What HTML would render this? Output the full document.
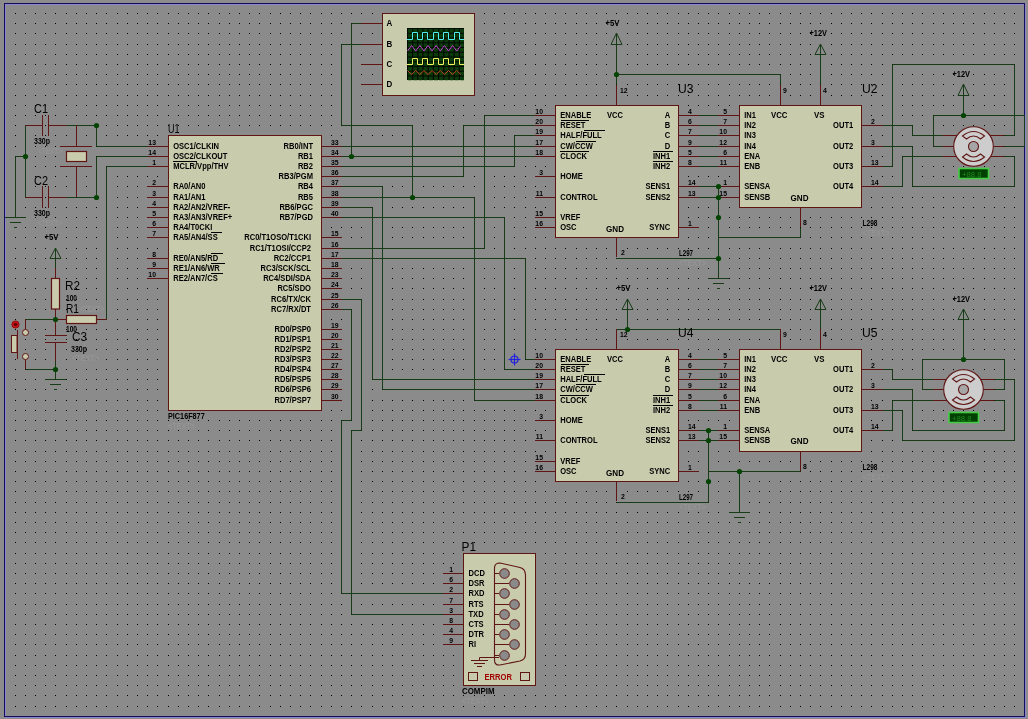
<!DOCTYPE html><html><head><meta charset="utf-8"><style>html,body{margin:0;padding:0;background:#8c8c8c;overflow:hidden}svg{display:block;will-change:transform;font-family:"Liberation Sans",sans-serif}</style></head><body><svg width="1028" height="719" viewBox="0 0 1028 719"><rect x="0" y="0" width="1028" height="719" fill="#8c8c8c"/>
<rect x="4" y="3" width="1021" height="714" fill="#8b8b8b"/>
<defs><pattern id="dx" x="15" y="0" width="51" height="719" patternUnits="userSpaceOnUse"><rect x="0" y="0" width="1" height="719" fill="#000"/><rect x="10" y="0" width="1" height="719" fill="#000"/><rect x="20" y="0" width="1" height="719" fill="#000"/><rect x="30" y="0" width="1" height="719" fill="#000"/><rect x="40" y="0" width="1" height="719" fill="#000"/></pattern></defs>
<rect x="15" y="13" width="1004" height="1" fill="url(#dx)"/>
<rect x="15" y="23" width="1004" height="1" fill="url(#dx)"/>
<rect x="15" y="33" width="1004" height="1" fill="url(#dx)"/>
<rect x="15" y="44" width="1004" height="1" fill="url(#dx)"/>
<rect x="15" y="54" width="1004" height="1" fill="url(#dx)"/>
<rect x="15" y="64" width="1004" height="1" fill="url(#dx)"/>
<rect x="15" y="74" width="1004" height="1" fill="url(#dx)"/>
<rect x="15" y="84" width="1004" height="1" fill="url(#dx)"/>
<rect x="15" y="95" width="1004" height="1" fill="url(#dx)"/>
<rect x="15" y="105" width="1004" height="1" fill="url(#dx)"/>
<rect x="15" y="115" width="1004" height="1" fill="url(#dx)"/>
<rect x="15" y="125" width="1004" height="1" fill="url(#dx)"/>
<rect x="15" y="135" width="1004" height="1" fill="url(#dx)"/>
<rect x="15" y="146" width="1004" height="1" fill="url(#dx)"/>
<rect x="15" y="156" width="1004" height="1" fill="url(#dx)"/>
<rect x="15" y="166" width="1004" height="1" fill="url(#dx)"/>
<rect x="15" y="176" width="1004" height="1" fill="url(#dx)"/>
<rect x="15" y="186" width="1004" height="1" fill="url(#dx)"/>
<rect x="15" y="197" width="1004" height="1" fill="url(#dx)"/>
<rect x="15" y="207" width="1004" height="1" fill="url(#dx)"/>
<rect x="15" y="217" width="1004" height="1" fill="url(#dx)"/>
<rect x="15" y="227" width="1004" height="1" fill="url(#dx)"/>
<rect x="15" y="237" width="1004" height="1" fill="url(#dx)"/>
<rect x="15" y="248" width="1004" height="1" fill="url(#dx)"/>
<rect x="15" y="258" width="1004" height="1" fill="url(#dx)"/>
<rect x="15" y="268" width="1004" height="1" fill="url(#dx)"/>
<rect x="15" y="278" width="1004" height="1" fill="url(#dx)"/>
<rect x="15" y="288" width="1004" height="1" fill="url(#dx)"/>
<rect x="15" y="299" width="1004" height="1" fill="url(#dx)"/>
<rect x="15" y="309" width="1004" height="1" fill="url(#dx)"/>
<rect x="15" y="319" width="1004" height="1" fill="url(#dx)"/>
<rect x="15" y="329" width="1004" height="1" fill="url(#dx)"/>
<rect x="15" y="339" width="1004" height="1" fill="url(#dx)"/>
<rect x="15" y="349" width="1004" height="1" fill="url(#dx)"/>
<rect x="15" y="359" width="1004" height="1" fill="url(#dx)"/>
<rect x="15" y="369" width="1004" height="1" fill="url(#dx)"/>
<rect x="15" y="379" width="1004" height="1" fill="url(#dx)"/>
<rect x="15" y="389" width="1004" height="1" fill="url(#dx)"/>
<rect x="15" y="400" width="1004" height="1" fill="url(#dx)"/>
<rect x="15" y="410" width="1004" height="1" fill="url(#dx)"/>
<rect x="15" y="420" width="1004" height="1" fill="url(#dx)"/>
<rect x="15" y="430" width="1004" height="1" fill="url(#dx)"/>
<rect x="15" y="440" width="1004" height="1" fill="url(#dx)"/>
<rect x="15" y="451" width="1004" height="1" fill="url(#dx)"/>
<rect x="15" y="461" width="1004" height="1" fill="url(#dx)"/>
<rect x="15" y="471" width="1004" height="1" fill="url(#dx)"/>
<rect x="15" y="481" width="1004" height="1" fill="url(#dx)"/>
<rect x="15" y="491" width="1004" height="1" fill="url(#dx)"/>
<rect x="15" y="502" width="1004" height="1" fill="url(#dx)"/>
<rect x="15" y="512" width="1004" height="1" fill="url(#dx)"/>
<rect x="15" y="522" width="1004" height="1" fill="url(#dx)"/>
<rect x="15" y="532" width="1004" height="1" fill="url(#dx)"/>
<rect x="15" y="542" width="1004" height="1" fill="url(#dx)"/>
<rect x="15" y="553" width="1004" height="1" fill="url(#dx)"/>
<rect x="15" y="563" width="1004" height="1" fill="url(#dx)"/>
<rect x="15" y="573" width="1004" height="1" fill="url(#dx)"/>
<rect x="15" y="583" width="1004" height="1" fill="url(#dx)"/>
<rect x="15" y="593" width="1004" height="1" fill="url(#dx)"/>
<rect x="15" y="604" width="1004" height="1" fill="url(#dx)"/>
<rect x="15" y="614" width="1004" height="1" fill="url(#dx)"/>
<rect x="15" y="624" width="1004" height="1" fill="url(#dx)"/>
<rect x="15" y="634" width="1004" height="1" fill="url(#dx)"/>
<rect x="15" y="644" width="1004" height="1" fill="url(#dx)"/>
<rect x="15" y="655" width="1004" height="1" fill="url(#dx)"/>
<rect x="15" y="665" width="1004" height="1" fill="url(#dx)"/>
<rect x="15" y="675" width="1004" height="1" fill="url(#dx)"/>
<rect x="15" y="685" width="1004" height="1" fill="url(#dx)"/>
<rect x="15" y="695" width="1004" height="1" fill="url(#dx)"/>
<rect x="15" y="706" width="1004" height="1" fill="url(#dx)"/>
<rect x="5.5" y="4.5" width="1020" height="713" fill="none" stroke="#8a86cc" stroke-width="1"/>
<rect x="4.5" y="3.5" width="1020" height="713" fill="none" stroke="#140c5a" stroke-width="1"/>
<polyline points="361.5,23.5 351.5,23.5 351.5,156.5" fill="none" stroke="#173a17" stroke-width="1"/>
<polyline points="361.5,44.5 341.5,44.5 341.5,125.5 412.5,125.5 412.5,197.5" fill="none" stroke="#173a17" stroke-width="1"/>
<polyline points="341.5,146.5 535.5,146.5" fill="none" stroke="#173a17" stroke-width="1"/>
<polyline points="341.5,156.5 535.5,156.5" fill="none" stroke="#173a17" stroke-width="1"/>
<polyline points="341.5,166.5 514.5,166.5 514.5,135.5 535.5,135.5" fill="none" stroke="#173a17" stroke-width="1"/>
<polyline points="341.5,176.5 463.5,176.5 463.5,125.5 535.5,125.5" fill="none" stroke="#173a17" stroke-width="1"/>
<polyline points="341.5,248.5 484.5,248.5 484.5,115.5 535.5,115.5" fill="none" stroke="#173a17" stroke-width="1"/>
<polyline points="341.5,186.5 382.5,186.5 382.5,389.5 535.5,389.5" fill="none" stroke="#173a17" stroke-width="1"/>
<polyline points="341.5,197.5 474.5,197.5 474.5,400.5 535.5,400.5" fill="none" stroke="#173a17" stroke-width="1"/>
<polyline points="341.5,207.5 372.5,207.5 372.5,379.5 535.5,379.5" fill="none" stroke="#173a17" stroke-width="1"/>
<polyline points="341.5,217.5 504.5,217.5 504.5,369.5 535.5,369.5" fill="none" stroke="#173a17" stroke-width="1"/>
<polyline points="341.5,258.5 525.5,258.5 525.5,359.5 535.5,359.5" fill="none" stroke="#173a17" stroke-width="1"/>
<polyline points="341.5,299.5 361.5,299.5 361.5,430.5 351.5,430.5 351.5,614.5 443.5,614.5" fill="none" stroke="#173a17" stroke-width="1"/>
<polyline points="341.5,309.5 351.5,309.5 351.5,420.5 341.5,420.5 341.5,593.5 443.5,593.5" fill="none" stroke="#173a17" stroke-width="1"/>
<polygon points="616.5,33 611.0,44.5 622.0,44.5" fill="none" stroke="#173a17" stroke-width="1"/>
<text x="605.5" y="26" font-size="8.4" font-weight="bold" text-anchor="start" fill="#000" textLength="14" lengthAdjust="spacingAndGlyphs" >+5V</text>
<polyline points="616.5,33.5 616.5,84.5" fill="none" stroke="#173a17" stroke-width="1"/>
<polyline points="616.5,74.5 780.5,74.5 780.5,84.5" fill="none" stroke="#173a17" stroke-width="1"/>
<polyline points="616.5,258.5 718.5,258.5" fill="none" stroke="#173a17" stroke-width="1"/>
<polyline points="698.5,115.5 718.5,115.5" fill="none" stroke="#173a17" stroke-width="1"/>
<polyline points="698.5,125.5 718.5,125.5" fill="none" stroke="#173a17" stroke-width="1"/>
<polyline points="698.5,135.5 718.5,135.5" fill="none" stroke="#173a17" stroke-width="1"/>
<polyline points="698.5,146.5 718.5,146.5" fill="none" stroke="#173a17" stroke-width="1"/>
<polyline points="698.5,156.5 718.5,156.5" fill="none" stroke="#173a17" stroke-width="1"/>
<polyline points="698.5,166.5 718.5,166.5" fill="none" stroke="#173a17" stroke-width="1"/>
<polyline points="698.5,186.5 718.5,186.5" fill="none" stroke="#173a17" stroke-width="1"/>
<polyline points="698.5,197.5 718.5,197.5" fill="none" stroke="#173a17" stroke-width="1"/>
<polyline points="718.5,186.5 718.5,278.5" fill="none" stroke="#173a17" stroke-width="1"/>
<polyline points="718.5,237.5 800.5,237.5 800.5,227.5" fill="none" stroke="#173a17" stroke-width="1"/>
<line x1="708" y1="278.5" x2="729" y2="278.5" stroke="#173a17" stroke-width="1"/>
<line x1="713" y1="283.5" x2="724" y2="283.5" stroke="#173a17" stroke-width="1"/>
<line x1="717" y1="288.5" x2="720" y2="288.5" stroke="#173a17" stroke-width="1"/>
<polygon points="820.5,44 815.0,54.5 826.0,54.5" fill="none" stroke="#173a17" stroke-width="1"/>
<text x="809.5" y="36" font-size="8.4" font-weight="bold" text-anchor="start" fill="#000" textLength="17.5" lengthAdjust="spacingAndGlyphs" >+12V</text>
<polyline points="820.5,44.5 820.5,84.5" fill="none" stroke="#173a17" stroke-width="1"/>
<polyline points="882.5,125.5 912.5,125.5 912.5,135.5 943.5,135.5" fill="none" stroke="#173a17" stroke-width="1"/>
<polyline points="882.5,146.5 912.5,146.5 912.5,186.5 1014.5,186.5 1014.5,156.5 1004.5,156.5" fill="none" stroke="#173a17" stroke-width="1"/>
<polyline points="882.5,166.5 892.5,166.5 892.5,64.5 1014.5,64.5 1014.5,135.5 1004.5,135.5" fill="none" stroke="#173a17" stroke-width="1"/>
<polyline points="882.5,186.5 902.5,186.5 902.5,156.5 943.5,156.5" fill="none" stroke="#173a17" stroke-width="1"/>
<polygon points="963.5,84 958.0,95.5 969.0,95.5" fill="none" stroke="#173a17" stroke-width="1"/>
<text x="952.5" y="77" font-size="8.4" font-weight="bold" text-anchor="start" fill="#000" textLength="17.5" lengthAdjust="spacingAndGlyphs" >+12V</text>
<polyline points="963.5,84.5 963.5,115.5" fill="none" stroke="#173a17" stroke-width="1"/>
<polyline points="943.5,146.5 933.5,146.5 933.5,115.5 1024.5,115.5" fill="none" stroke="#173a17" stroke-width="1"/>
<polyline points="1004.5,146.5 1024.5,146.5 1024.5,115.5" fill="none" stroke="#173a17" stroke-width="1"/>
<line x1="943" y1="135.5" x2="957" y2="135.5" stroke="#601515" stroke-width="1"/>
<line x1="990" y1="135.5" x2="1004" y2="135.5" stroke="#601515" stroke-width="1"/>
<line x1="943" y1="146.5" x2="957" y2="146.5" stroke="#601515" stroke-width="1"/>
<line x1="990" y1="146.5" x2="1004" y2="146.5" stroke="#601515" stroke-width="1"/>
<line x1="943" y1="156.5" x2="957" y2="156.5" stroke="#601515" stroke-width="1"/>
<line x1="990" y1="156.5" x2="1004" y2="156.5" stroke="#601515" stroke-width="1"/>
<polygon points="627.5,299 622.0,309.5 633.0,309.5" fill="none" stroke="#173a17" stroke-width="1"/>
<text x="616.5" y="291" font-size="8.4" font-weight="bold" text-anchor="start" fill="#000" textLength="14" lengthAdjust="spacingAndGlyphs" >+5V</text>
<polyline points="627.5,299.5 627.5,329.5" fill="none" stroke="#173a17" stroke-width="1"/>
<polyline points="616.5,329.5 780.5,329.5" fill="none" stroke="#173a17" stroke-width="1"/>
<polyline points="616.5,329.5 616.5,339.5" fill="none" stroke="#173a17" stroke-width="1"/>
<polyline points="616.5,502.5 708.5,502.5 708.5,430.5" fill="none" stroke="#173a17" stroke-width="1"/>
<polyline points="698.5,359.5 718.5,359.5" fill="none" stroke="#173a17" stroke-width="1"/>
<polyline points="698.5,369.5 718.5,369.5" fill="none" stroke="#173a17" stroke-width="1"/>
<polyline points="698.5,379.5 718.5,379.5" fill="none" stroke="#173a17" stroke-width="1"/>
<polyline points="698.5,389.5 718.5,389.5" fill="none" stroke="#173a17" stroke-width="1"/>
<polyline points="698.5,400.5 718.5,400.5" fill="none" stroke="#173a17" stroke-width="1"/>
<polyline points="698.5,410.5 718.5,410.5" fill="none" stroke="#173a17" stroke-width="1"/>
<polyline points="698.5,430.5 718.5,430.5" fill="none" stroke="#173a17" stroke-width="1"/>
<polyline points="698.5,440.5 718.5,440.5" fill="none" stroke="#173a17" stroke-width="1"/>
<polyline points="708.5,471.5 800.5,471.5 800.5,461.5" fill="none" stroke="#173a17" stroke-width="1"/>
<polyline points="739.5,471.5 739.5,512.5" fill="none" stroke="#173a17" stroke-width="1"/>
<line x1="729" y1="512.5" x2="750" y2="512.5" stroke="#173a17" stroke-width="1"/>
<line x1="734" y1="517.5" x2="745" y2="517.5" stroke="#173a17" stroke-width="1"/>
<line x1="738" y1="522.5" x2="741" y2="522.5" stroke="#173a17" stroke-width="1"/>
<polygon points="820.5,299 815.0,309.5 826.0,309.5" fill="none" stroke="#173a17" stroke-width="1"/>
<text x="809.5" y="291" font-size="8.4" font-weight="bold" text-anchor="start" fill="#000" textLength="17.5" lengthAdjust="spacingAndGlyphs" >+12V</text>
<polyline points="820.5,299.5 820.5,329.5" fill="none" stroke="#173a17" stroke-width="1"/>
<polyline points="882.5,369.5 892.5,369.5 892.5,379.5 933.5,379.5" fill="none" stroke="#173a17" stroke-width="1"/>
<polyline points="882.5,389.5 912.5,389.5 912.5,430.5 1004.5,430.5 1004.5,400.5 994.5,400.5" fill="none" stroke="#173a17" stroke-width="1"/>
<polyline points="882.5,410.5 902.5,410.5 902.5,440.5 1014.5,440.5 1014.5,379.5 994.5,379.5" fill="none" stroke="#173a17" stroke-width="1"/>
<polyline points="882.5,430.5 892.5,430.5 892.5,400.5 933.5,400.5" fill="none" stroke="#173a17" stroke-width="1"/>
<polygon points="963.5,309 958.0,319.5 969.0,319.5" fill="none" stroke="#173a17" stroke-width="1"/>
<text x="952.5" y="302" font-size="8.4" font-weight="bold" text-anchor="start" fill="#000" textLength="17.5" lengthAdjust="spacingAndGlyphs" >+12V</text>
<polyline points="963.5,309.5 963.5,359.5" fill="none" stroke="#173a17" stroke-width="1"/>
<polyline points="922.5,389.5 922.5,359.5 1004.5,359.5 1004.5,389.5 994.5,389.5" fill="none" stroke="#173a17" stroke-width="1"/>
<polyline points="922.5,389.5 933.5,389.5" fill="none" stroke="#173a17" stroke-width="1"/>
<line x1="933" y1="379.5" x2="947" y2="379.5" stroke="#601515" stroke-width="1"/>
<line x1="980" y1="379.5" x2="994" y2="379.5" stroke="#601515" stroke-width="1"/>
<line x1="933" y1="389.5" x2="947" y2="389.5" stroke="#601515" stroke-width="1"/>
<line x1="980" y1="389.5" x2="994" y2="389.5" stroke="#601515" stroke-width="1"/>
<line x1="933" y1="400.5" x2="947" y2="400.5" stroke="#601515" stroke-width="1"/>
<line x1="980" y1="400.5" x2="994" y2="400.5" stroke="#601515" stroke-width="1"/>
<circle cx="514.5" cy="359.5" r="3.5" fill="none" stroke="#2020e0" stroke-width="1.2"/>
<line x1="508.5" y1="359.5" x2="520.5" y2="359.5" stroke="#2020e0" stroke-width="1.2"/>
<line x1="514.5" y1="353.5" x2="514.5" y2="365.5" stroke="#2020e0" stroke-width="1.2"/>
<rect x="168.5" y="135.5" width="153.0" height="275.0" fill="#c9cbad" stroke="#601515" stroke-width="1"/>
<line x1="147" y1="146.5" x2="168" y2="146.5" stroke="#601515" stroke-width="1"/>
<text transform="translate(156,144.5) scale(0.86,1)" font-size="8" font-weight="bold" text-anchor="end" fill="#000" >13</text>
<text transform="translate(173.2,149) scale(0.9,1)" font-size="8.4" font-weight="bold" text-anchor="start" fill="#000" >OSC1/CLKIN</text>
<line x1="147" y1="156.5" x2="168" y2="156.5" stroke="#601515" stroke-width="1"/>
<text transform="translate(156,154.5) scale(0.86,1)" font-size="8" font-weight="bold" text-anchor="end" fill="#000" >14</text>
<text transform="translate(173.2,159) scale(0.9,1)" font-size="8.4" font-weight="bold" text-anchor="start" fill="#000" >OSC2/CLKOUT</text>
<line x1="147" y1="166.5" x2="168" y2="166.5" stroke="#601515" stroke-width="1"/>
<text transform="translate(156,164.5) scale(0.86,1)" font-size="8" font-weight="bold" text-anchor="end" fill="#000" >1</text>
<text transform="translate(173.2,169) scale(0.9,1)" font-size="8.4" font-weight="bold" text-anchor="start" fill="#000" >MCLR/Vpp/THV</text>
<line x1="147" y1="186.5" x2="168" y2="186.5" stroke="#601515" stroke-width="1"/>
<text transform="translate(156,184.5) scale(0.86,1)" font-size="8" font-weight="bold" text-anchor="end" fill="#000" >2</text>
<text transform="translate(173.2,189) scale(0.9,1)" font-size="8.4" font-weight="bold" text-anchor="start" fill="#000" >RA0/AN0</text>
<line x1="147" y1="197.5" x2="168" y2="197.5" stroke="#601515" stroke-width="1"/>
<text transform="translate(156,195.5) scale(0.86,1)" font-size="8" font-weight="bold" text-anchor="end" fill="#000" >3</text>
<text transform="translate(173.2,200) scale(0.9,1)" font-size="8.4" font-weight="bold" text-anchor="start" fill="#000" >RA1/AN1</text>
<line x1="147" y1="207.5" x2="168" y2="207.5" stroke="#601515" stroke-width="1"/>
<text transform="translate(156,205.5) scale(0.86,1)" font-size="8" font-weight="bold" text-anchor="end" fill="#000" >4</text>
<text transform="translate(173.2,210) scale(0.9,1)" font-size="8.4" font-weight="bold" text-anchor="start" fill="#000" >RA2/AN2/VREF-</text>
<line x1="147" y1="217.5" x2="168" y2="217.5" stroke="#601515" stroke-width="1"/>
<text transform="translate(156,215.5) scale(0.86,1)" font-size="8" font-weight="bold" text-anchor="end" fill="#000" >5</text>
<text transform="translate(173.2,220) scale(0.9,1)" font-size="8.4" font-weight="bold" text-anchor="start" fill="#000" >RA3/AN3/VREF+</text>
<line x1="147" y1="227.5" x2="168" y2="227.5" stroke="#601515" stroke-width="1"/>
<text transform="translate(156,225.5) scale(0.86,1)" font-size="8" font-weight="bold" text-anchor="end" fill="#000" >6</text>
<text transform="translate(173.2,230) scale(0.9,1)" font-size="8.4" font-weight="bold" text-anchor="start" fill="#000" >RA4/T0CKI</text>
<line x1="147" y1="237.5" x2="168" y2="237.5" stroke="#601515" stroke-width="1"/>
<text transform="translate(156,235.5) scale(0.86,1)" font-size="8" font-weight="bold" text-anchor="end" fill="#000" >7</text>
<text transform="translate(173.2,240) scale(0.9,1)" font-size="8.4" font-weight="bold" text-anchor="start" fill="#000" >RA5/AN4/SS</text>
<line x1="147" y1="258.5" x2="168" y2="258.5" stroke="#601515" stroke-width="1"/>
<text transform="translate(156,256.5) scale(0.86,1)" font-size="8" font-weight="bold" text-anchor="end" fill="#000" >8</text>
<text transform="translate(173.2,261) scale(0.9,1)" font-size="8.4" font-weight="bold" text-anchor="start" fill="#000" >RE0/AN5/RD</text>
<line x1="147" y1="268.5" x2="168" y2="268.5" stroke="#601515" stroke-width="1"/>
<text transform="translate(156,266.5) scale(0.86,1)" font-size="8" font-weight="bold" text-anchor="end" fill="#000" >9</text>
<text transform="translate(173.2,271) scale(0.9,1)" font-size="8.4" font-weight="bold" text-anchor="start" fill="#000" >RE1/AN6/WR</text>
<line x1="147" y1="278.5" x2="168" y2="278.5" stroke="#601515" stroke-width="1"/>
<text transform="translate(156,276.5) scale(0.86,1)" font-size="8" font-weight="bold" text-anchor="end" fill="#000" >10</text>
<text transform="translate(173.2,281) scale(0.9,1)" font-size="8.4" font-weight="bold" text-anchor="start" fill="#000" >RE2/AN7/CS</text>
<line x1="321" y1="146.5" x2="342" y2="146.5" stroke="#601515" stroke-width="1"/>
<text transform="translate(331,144.5) scale(0.86,1)" font-size="8" font-weight="bold" text-anchor="start" fill="#000" >33</text>
<text transform="translate(313,149) scale(0.9,1)" font-size="8.4" font-weight="bold" text-anchor="end" fill="#000" >RB0/INT</text>
<line x1="321" y1="156.5" x2="342" y2="156.5" stroke="#601515" stroke-width="1"/>
<text transform="translate(331,154.5) scale(0.86,1)" font-size="8" font-weight="bold" text-anchor="start" fill="#000" >34</text>
<text transform="translate(313,159) scale(0.9,1)" font-size="8.4" font-weight="bold" text-anchor="end" fill="#000" >RB1</text>
<line x1="321" y1="166.5" x2="342" y2="166.5" stroke="#601515" stroke-width="1"/>
<text transform="translate(331,164.5) scale(0.86,1)" font-size="8" font-weight="bold" text-anchor="start" fill="#000" >35</text>
<text transform="translate(313,169) scale(0.9,1)" font-size="8.4" font-weight="bold" text-anchor="end" fill="#000" >RB2</text>
<line x1="321" y1="176.5" x2="342" y2="176.5" stroke="#601515" stroke-width="1"/>
<text transform="translate(331,174.5) scale(0.86,1)" font-size="8" font-weight="bold" text-anchor="start" fill="#000" >36</text>
<text transform="translate(313,179) scale(0.9,1)" font-size="8.4" font-weight="bold" text-anchor="end" fill="#000" >RB3/PGM</text>
<line x1="321" y1="186.5" x2="342" y2="186.5" stroke="#601515" stroke-width="1"/>
<text transform="translate(331,184.5) scale(0.86,1)" font-size="8" font-weight="bold" text-anchor="start" fill="#000" >37</text>
<text transform="translate(313,189) scale(0.9,1)" font-size="8.4" font-weight="bold" text-anchor="end" fill="#000" >RB4</text>
<line x1="321" y1="197.5" x2="342" y2="197.5" stroke="#601515" stroke-width="1"/>
<text transform="translate(331,195.5) scale(0.86,1)" font-size="8" font-weight="bold" text-anchor="start" fill="#000" >38</text>
<text transform="translate(313,200) scale(0.9,1)" font-size="8.4" font-weight="bold" text-anchor="end" fill="#000" >RB5</text>
<line x1="321" y1="207.5" x2="342" y2="207.5" stroke="#601515" stroke-width="1"/>
<text transform="translate(331,205.5) scale(0.86,1)" font-size="8" font-weight="bold" text-anchor="start" fill="#000" >39</text>
<text transform="translate(313,210) scale(0.9,1)" font-size="8.4" font-weight="bold" text-anchor="end" fill="#000" >RB6/PGC</text>
<line x1="321" y1="217.5" x2="342" y2="217.5" stroke="#601515" stroke-width="1"/>
<text transform="translate(331,215.5) scale(0.86,1)" font-size="8" font-weight="bold" text-anchor="start" fill="#000" >40</text>
<text transform="translate(313,220) scale(0.9,1)" font-size="8.4" font-weight="bold" text-anchor="end" fill="#000" >RB7/PGD</text>
<line x1="321" y1="237.5" x2="342" y2="237.5" stroke="#601515" stroke-width="1"/>
<text transform="translate(331,235.5) scale(0.86,1)" font-size="8" font-weight="bold" text-anchor="start" fill="#000" >15</text>
<text transform="translate(311,240) scale(0.9,1)" font-size="8.4" font-weight="bold" text-anchor="end" fill="#000" >RC0/T1OSO/T1CKI</text>
<line x1="321" y1="248.5" x2="342" y2="248.5" stroke="#601515" stroke-width="1"/>
<text transform="translate(331,246.5) scale(0.86,1)" font-size="8" font-weight="bold" text-anchor="start" fill="#000" >16</text>
<text transform="translate(311,251) scale(0.9,1)" font-size="8.4" font-weight="bold" text-anchor="end" fill="#000" >RC1/T1OSI/CCP2</text>
<line x1="321" y1="258.5" x2="342" y2="258.5" stroke="#601515" stroke-width="1"/>
<text transform="translate(331,256.5) scale(0.86,1)" font-size="8" font-weight="bold" text-anchor="start" fill="#000" >17</text>
<text transform="translate(311,261) scale(0.9,1)" font-size="8.4" font-weight="bold" text-anchor="end" fill="#000" >RC2/CCP1</text>
<line x1="321" y1="268.5" x2="342" y2="268.5" stroke="#601515" stroke-width="1"/>
<text transform="translate(331,266.5) scale(0.86,1)" font-size="8" font-weight="bold" text-anchor="start" fill="#000" >18</text>
<text transform="translate(311,271) scale(0.9,1)" font-size="8.4" font-weight="bold" text-anchor="end" fill="#000" >RC3/SCK/SCL</text>
<line x1="321" y1="278.5" x2="342" y2="278.5" stroke="#601515" stroke-width="1"/>
<text transform="translate(331,276.5) scale(0.86,1)" font-size="8" font-weight="bold" text-anchor="start" fill="#000" >23</text>
<text transform="translate(311,281) scale(0.9,1)" font-size="8.4" font-weight="bold" text-anchor="end" fill="#000" >RC4/SDI/SDA</text>
<line x1="321" y1="288.5" x2="342" y2="288.5" stroke="#601515" stroke-width="1"/>
<text transform="translate(331,286.5) scale(0.86,1)" font-size="8" font-weight="bold" text-anchor="start" fill="#000" >24</text>
<text transform="translate(311,291) scale(0.9,1)" font-size="8.4" font-weight="bold" text-anchor="end" fill="#000" >RC5/SDO</text>
<line x1="321" y1="299.5" x2="342" y2="299.5" stroke="#601515" stroke-width="1"/>
<text transform="translate(331,297.5) scale(0.86,1)" font-size="8" font-weight="bold" text-anchor="start" fill="#000" >25</text>
<text transform="translate(311,302) scale(0.9,1)" font-size="8.4" font-weight="bold" text-anchor="end" fill="#000" >RC6/TX/CK</text>
<line x1="321" y1="309.5" x2="342" y2="309.5" stroke="#601515" stroke-width="1"/>
<text transform="translate(331,307.5) scale(0.86,1)" font-size="8" font-weight="bold" text-anchor="start" fill="#000" >26</text>
<text transform="translate(311,312) scale(0.9,1)" font-size="8.4" font-weight="bold" text-anchor="end" fill="#000" >RC7/RX/DT</text>
<line x1="321" y1="329.5" x2="342" y2="329.5" stroke="#601515" stroke-width="1"/>
<text transform="translate(331,327.5) scale(0.86,1)" font-size="8" font-weight="bold" text-anchor="start" fill="#000" >19</text>
<text transform="translate(311,332) scale(0.9,1)" font-size="8.4" font-weight="bold" text-anchor="end" fill="#000" >RD0/PSP0</text>
<line x1="321" y1="339.5" x2="342" y2="339.5" stroke="#601515" stroke-width="1"/>
<text transform="translate(331,337.5) scale(0.86,1)" font-size="8" font-weight="bold" text-anchor="start" fill="#000" >20</text>
<text transform="translate(311,342) scale(0.9,1)" font-size="8.4" font-weight="bold" text-anchor="end" fill="#000" >RD1/PSP1</text>
<line x1="321" y1="349.5" x2="342" y2="349.5" stroke="#601515" stroke-width="1"/>
<text transform="translate(331,347.5) scale(0.86,1)" font-size="8" font-weight="bold" text-anchor="start" fill="#000" >21</text>
<text transform="translate(311,352) scale(0.9,1)" font-size="8.4" font-weight="bold" text-anchor="end" fill="#000" >RD2/PSP2</text>
<line x1="321" y1="359.5" x2="342" y2="359.5" stroke="#601515" stroke-width="1"/>
<text transform="translate(331,357.5) scale(0.86,1)" font-size="8" font-weight="bold" text-anchor="start" fill="#000" >22</text>
<text transform="translate(311,362) scale(0.9,1)" font-size="8.4" font-weight="bold" text-anchor="end" fill="#000" >RD3/PSP3</text>
<line x1="321" y1="369.5" x2="342" y2="369.5" stroke="#601515" stroke-width="1"/>
<text transform="translate(331,367.5) scale(0.86,1)" font-size="8" font-weight="bold" text-anchor="start" fill="#000" >27</text>
<text transform="translate(311,372) scale(0.9,1)" font-size="8.4" font-weight="bold" text-anchor="end" fill="#000" >RD4/PSP4</text>
<line x1="321" y1="379.5" x2="342" y2="379.5" stroke="#601515" stroke-width="1"/>
<text transform="translate(331,377.5) scale(0.86,1)" font-size="8" font-weight="bold" text-anchor="start" fill="#000" >28</text>
<text transform="translate(311,382) scale(0.9,1)" font-size="8.4" font-weight="bold" text-anchor="end" fill="#000" >RD5/PSP5</text>
<line x1="321" y1="389.5" x2="342" y2="389.5" stroke="#601515" stroke-width="1"/>
<text transform="translate(331,387.5) scale(0.86,1)" font-size="8" font-weight="bold" text-anchor="start" fill="#000" >29</text>
<text transform="translate(311,392) scale(0.9,1)" font-size="8.4" font-weight="bold" text-anchor="end" fill="#000" >RD6/PSP6</text>
<line x1="321" y1="400.5" x2="342" y2="400.5" stroke="#601515" stroke-width="1"/>
<text transform="translate(331,398.5) scale(0.86,1)" font-size="8" font-weight="bold" text-anchor="start" fill="#000" >30</text>
<text transform="translate(311,403) scale(0.9,1)" font-size="8.4" font-weight="bold" text-anchor="end" fill="#000" >RD7/PSP7</text>
<line x1="173" y1="161.5" x2="197" y2="161.5" stroke="#000" stroke-width="1"/>
<line x1="211" y1="232.5" x2="222" y2="232.5" stroke="#000" stroke-width="1"/>
<line x1="211" y1="253.5" x2="223" y2="253.5" stroke="#000" stroke-width="1"/>
<line x1="211" y1="263.5" x2="225" y2="263.5" stroke="#000" stroke-width="1"/>
<line x1="211" y1="273.5" x2="223" y2="273.5" stroke="#000" stroke-width="1"/>
<text x="168" y="429" font-size="8.4" font-weight="bold" text-anchor="start" fill="#949494" textLength="27" lengthAdjust="spacingAndGlyphs" >&lt;TEXT&gt;</text>
<text x="168" y="133" font-size="13.5" font-weight="normal" text-anchor="start" fill="#000" textLength="11.5" lengthAdjust="spacingAndGlyphs" >U1</text>
<text x="168" y="419" font-size="8.4" font-weight="bold" text-anchor="start" fill="#000" textLength="36.7" lengthAdjust="spacingAndGlyphs" >PIC16F877</text>
<line x1="25" y1="125.5" x2="42" y2="125.5" stroke="#601515" stroke-width="1"/>
<line x1="48" y1="125.5" x2="67" y2="125.5" stroke="#601515" stroke-width="1"/>
<line x1="42.5" y1="115" x2="42.5" y2="136" stroke="#601515" stroke-width="1"/>
<line x1="48.5" y1="115" x2="48.5" y2="136" stroke="#601515" stroke-width="1"/>
<text x="34" y="113" font-size="13.5" font-weight="normal" text-anchor="start" fill="#000" textLength="14" lengthAdjust="spacingAndGlyphs" >C1</text>
<text x="34" y="144" font-size="8.4" font-weight="bold" text-anchor="start" fill="#000" textLength="16" lengthAdjust="spacingAndGlyphs" >330p</text>
<text x="38" y="154" font-size="8.4" font-weight="bold" text-anchor="start" fill="#949494" textLength="24" lengthAdjust="spacingAndGlyphs" >&lt;TEXT&gt;</text>
<line x1="25" y1="197.5" x2="42" y2="197.5" stroke="#601515" stroke-width="1"/>
<line x1="48" y1="197.5" x2="67" y2="197.5" stroke="#601515" stroke-width="1"/>
<line x1="42.5" y1="186" x2="42.5" y2="208" stroke="#601515" stroke-width="1"/>
<line x1="48.5" y1="186" x2="48.5" y2="208" stroke="#601515" stroke-width="1"/>
<text x="34" y="185" font-size="13.5" font-weight="normal" text-anchor="start" fill="#000" textLength="14" lengthAdjust="spacingAndGlyphs" >C2</text>
<text x="34" y="216" font-size="8.4" font-weight="bold" text-anchor="start" fill="#000" textLength="16" lengthAdjust="spacingAndGlyphs" >330p</text>
<text x="38" y="226" font-size="8.4" font-weight="bold" text-anchor="start" fill="#949494" textLength="24" lengthAdjust="spacingAndGlyphs" >&lt;TEXT&gt;</text>
<polyline points="66.5,125.5 96.5,125.5 96.5,146.5 147.5,146.5" fill="none" stroke="#173a17" stroke-width="1"/>
<polyline points="66.5,197.5 96.5,197.5 96.5,156.5 147.5,156.5" fill="none" stroke="#173a17" stroke-width="1"/>
<polyline points="25.5,125.5 25.5,197.5" fill="none" stroke="#173a17" stroke-width="1"/>
<polyline points="15.5,217.5 15.5,156.5 25.5,156.5" fill="none" stroke="#173a17" stroke-width="1"/>
<line x1="5" y1="217.5" x2="26" y2="217.5" stroke="#173a17" stroke-width="1"/>
<line x1="10" y1="222.5" x2="21" y2="222.5" stroke="#173a17" stroke-width="1"/>
<line x1="14" y1="227.5" x2="17" y2="227.5" stroke="#173a17" stroke-width="1"/>
<line x1="76.5" y1="125" x2="76.5" y2="146" stroke="#601515" stroke-width="1"/>
<line x1="76.5" y1="166" x2="76.5" y2="197" stroke="#601515" stroke-width="1"/>
<line x1="60" y1="146.5" x2="92" y2="146.5" stroke="#601515" stroke-width="1"/>
<line x1="60" y1="166.5" x2="92" y2="166.5" stroke="#601515" stroke-width="1"/>
<rect x="66.5" y="151.5" width="20" height="10" fill="#c9cbad" stroke="#601515" stroke-width="1.2"/>
<polyline points="147.5,166.5 106.5,166.5 106.5,319.5" fill="none" stroke="#173a17" stroke-width="1"/>
<polygon points="55.5,248 50.0,258.5 61.0,258.5" fill="none" stroke="#173a17" stroke-width="1"/>
<text x="44.5" y="240" font-size="8.4" font-weight="bold" text-anchor="start" fill="#000" textLength="14" lengthAdjust="spacingAndGlyphs" >+5V</text>
<line x1="55.5" y1="248" x2="55.5" y2="268" stroke="#173a17" stroke-width="1"/>
<line x1="55.5" y1="268" x2="55.5" y2="279" stroke="#601515" stroke-width="1"/>
<rect x="51.5" y="278.5" width="8" height="30.5" fill="#c9cbad" stroke="#601515" stroke-width="1.2"/>
<line x1="55.5" y1="309" x2="55.5" y2="319" stroke="#601515" stroke-width="1"/>
<text x="65" y="290" font-size="13.5" font-weight="normal" text-anchor="start" fill="#000" textLength="15" lengthAdjust="spacingAndGlyphs" >R2</text>
<text x="66" y="301" font-size="8.4" font-weight="bold" text-anchor="start" fill="#000" textLength="11" lengthAdjust="spacingAndGlyphs" >100</text>
<line x1="55" y1="319.5" x2="66" y2="319.5" stroke="#601515" stroke-width="1"/>
<rect x="66.5" y="315.5" width="30" height="8" fill="#c9cbad" stroke="#601515" stroke-width="1.2"/>
<line x1="97" y1="319.5" x2="107" y2="319.5" stroke="#601515" stroke-width="1"/>
<text x="66" y="312.5" font-size="13.5" font-weight="normal" text-anchor="start" fill="#000" textLength="13" lengthAdjust="spacingAndGlyphs" >R1</text>
<text x="66" y="332" font-size="8.4" font-weight="bold" text-anchor="start" fill="#000" textLength="11" lengthAdjust="spacingAndGlyphs" >100</text>
<text x="80" y="312" font-size="8.4" font-weight="bold" text-anchor="start" fill="#949494" textLength="24" lengthAdjust="spacingAndGlyphs" >&lt;TEXT&gt;</text>
<line x1="55.5" y1="319" x2="55.5" y2="336" stroke="#601515" stroke-width="1"/>
<line x1="45" y1="335.5" x2="67" y2="335.5" stroke="#601515" stroke-width="1"/>
<line x1="45" y1="342.5" x2="67" y2="342.5" stroke="#601515" stroke-width="1"/>
<line x1="55.5" y1="342" x2="55.5" y2="361" stroke="#601515" stroke-width="1"/>
<line x1="55.5" y1="361" x2="55.5" y2="369" stroke="#173a17" stroke-width="1"/>
<text x="72" y="340.5" font-size="13.5" font-weight="normal" text-anchor="start" fill="#000" textLength="15" lengthAdjust="spacingAndGlyphs" >C3</text>
<text x="71" y="352" font-size="8.4" font-weight="bold" text-anchor="start" fill="#000" textLength="16" lengthAdjust="spacingAndGlyphs" >330p</text>
<text x="72" y="361" font-size="8.4" font-weight="bold" text-anchor="start" fill="#949494" textLength="27" lengthAdjust="spacingAndGlyphs" >&lt;TEXT&gt;</text>
<polyline points="55.5,369.5 55.5,379.5" fill="none" stroke="#173a17" stroke-width="1"/>
<line x1="45" y1="379.5" x2="66" y2="379.5" stroke="#173a17" stroke-width="1"/>
<line x1="50" y1="384.5" x2="61" y2="384.5" stroke="#173a17" stroke-width="1"/>
<line x1="54" y1="389.5" x2="57" y2="389.5" stroke="#173a17" stroke-width="1"/>
<polyline points="25.5,319.5 55.5,319.5" fill="none" stroke="#173a17" stroke-width="1"/>
<polyline points="25.5,369.5 55.5,369.5" fill="none" stroke="#173a17" stroke-width="1"/>
<line x1="25.5" y1="319" x2="25.5" y2="330" stroke="#601515" stroke-width="1"/>
<line x1="25.5" y1="359" x2="25.5" y2="369" stroke="#601515" stroke-width="1"/>
<circle cx="25.5" cy="332.5" r="3" fill="#c9cbad" stroke="#601515" stroke-width="1"/>
<circle cx="25.5" cy="356.5" r="3" fill="#c9cbad" stroke="#601515" stroke-width="1"/>
<rect x="11.5" y="335.5" width="5.5" height="17" fill="#c9cbad" stroke="#601515" stroke-width="1"/>
<line x1="17.5" y1="330" x2="17.5" y2="359" stroke="#601515" stroke-width="1"/>
<circle cx="15.5" cy="324.5" r="3.6" fill="#d01010" stroke="#901010" stroke-width="1"/>
<circle cx="15.5" cy="324.5" r="1.8" fill="#600000"/>
<rect x="382.5" y="13.5" width="92.0" height="82.0" fill="#c9cbad" stroke="#601515" stroke-width="1"/>
<line x1="361" y1="23.5" x2="382" y2="23.5" stroke="#601515" stroke-width="1"/>
<text transform="translate(389.5,26) scale(0.95,1)" font-size="8.4" font-weight="bold" text-anchor="middle" fill="#000" >A</text>
<line x1="361" y1="44.5" x2="382" y2="44.5" stroke="#601515" stroke-width="1"/>
<text transform="translate(389.5,47) scale(0.95,1)" font-size="8.4" font-weight="bold" text-anchor="middle" fill="#000" >B</text>
<line x1="361" y1="64.5" x2="382" y2="64.5" stroke="#601515" stroke-width="1"/>
<text transform="translate(389.5,67) scale(0.95,1)" font-size="8.4" font-weight="bold" text-anchor="middle" fill="#000" >C</text>
<line x1="361" y1="84.5" x2="382" y2="84.5" stroke="#601515" stroke-width="1"/>
<text transform="translate(389.5,87) scale(0.95,1)" font-size="8.4" font-weight="bold" text-anchor="middle" fill="#000" >D</text>
<rect x="407" y="28" width="57" height="52" fill="#000a00"/>
<path d="M408.0 29.0h4v3.8h-4zM413.2 29.0h4v3.8h-4zM418.4 29.0h4v3.8h-4zM423.6 29.0h4v3.8h-4zM428.8 29.0h4v3.8h-4zM434.0 29.0h4v3.8h-4zM439.2 29.0h4v3.8h-4zM444.4 29.0h4v3.8h-4zM449.6 29.0h4v3.8h-4zM454.8 29.0h4v3.8h-4zM460.0 29.0h4v3.8h-4zM408.0 33.8h4v3.8h-4zM413.2 33.8h4v3.8h-4zM418.4 33.8h4v3.8h-4zM423.6 33.8h4v3.8h-4zM428.8 33.8h4v3.8h-4zM434.0 33.8h4v3.8h-4zM439.2 33.8h4v3.8h-4zM444.4 33.8h4v3.8h-4zM449.6 33.8h4v3.8h-4zM454.8 33.8h4v3.8h-4zM460.0 33.8h4v3.8h-4zM408.0 38.5h4v3.8h-4zM413.2 38.5h4v3.8h-4zM418.4 38.5h4v3.8h-4zM423.6 38.5h4v3.8h-4zM428.8 38.5h4v3.8h-4zM434.0 38.5h4v3.8h-4zM439.2 38.5h4v3.8h-4zM444.4 38.5h4v3.8h-4zM449.6 38.5h4v3.8h-4zM454.8 38.5h4v3.8h-4zM460.0 38.5h4v3.8h-4zM408.0 43.2h4v3.8h-4zM413.2 43.2h4v3.8h-4zM418.4 43.2h4v3.8h-4zM423.6 43.2h4v3.8h-4zM428.8 43.2h4v3.8h-4zM434.0 43.2h4v3.8h-4zM439.2 43.2h4v3.8h-4zM444.4 43.2h4v3.8h-4zM449.6 43.2h4v3.8h-4zM454.8 43.2h4v3.8h-4zM460.0 43.2h4v3.8h-4zM408.0 48.0h4v3.8h-4zM413.2 48.0h4v3.8h-4zM418.4 48.0h4v3.8h-4zM423.6 48.0h4v3.8h-4zM428.8 48.0h4v3.8h-4zM434.0 48.0h4v3.8h-4zM439.2 48.0h4v3.8h-4zM444.4 48.0h4v3.8h-4zM449.6 48.0h4v3.8h-4zM454.8 48.0h4v3.8h-4zM460.0 48.0h4v3.8h-4zM408.0 52.8h4v3.8h-4zM413.2 52.8h4v3.8h-4zM418.4 52.8h4v3.8h-4zM423.6 52.8h4v3.8h-4zM428.8 52.8h4v3.8h-4zM434.0 52.8h4v3.8h-4zM439.2 52.8h4v3.8h-4zM444.4 52.8h4v3.8h-4zM449.6 52.8h4v3.8h-4zM454.8 52.8h4v3.8h-4zM460.0 52.8h4v3.8h-4zM408.0 57.5h4v3.8h-4zM413.2 57.5h4v3.8h-4zM418.4 57.5h4v3.8h-4zM423.6 57.5h4v3.8h-4zM428.8 57.5h4v3.8h-4zM434.0 57.5h4v3.8h-4zM439.2 57.5h4v3.8h-4zM444.4 57.5h4v3.8h-4zM449.6 57.5h4v3.8h-4zM454.8 57.5h4v3.8h-4zM460.0 57.5h4v3.8h-4zM408.0 62.2h4v3.8h-4zM413.2 62.2h4v3.8h-4zM418.4 62.2h4v3.8h-4zM423.6 62.2h4v3.8h-4zM428.8 62.2h4v3.8h-4zM434.0 62.2h4v3.8h-4zM439.2 62.2h4v3.8h-4zM444.4 62.2h4v3.8h-4zM449.6 62.2h4v3.8h-4zM454.8 62.2h4v3.8h-4zM460.0 62.2h4v3.8h-4zM408.0 67.0h4v3.8h-4zM413.2 67.0h4v3.8h-4zM418.4 67.0h4v3.8h-4zM423.6 67.0h4v3.8h-4zM428.8 67.0h4v3.8h-4zM434.0 67.0h4v3.8h-4zM439.2 67.0h4v3.8h-4zM444.4 67.0h4v3.8h-4zM449.6 67.0h4v3.8h-4zM454.8 67.0h4v3.8h-4zM460.0 67.0h4v3.8h-4zM408.0 71.8h4v3.8h-4zM413.2 71.8h4v3.8h-4zM418.4 71.8h4v3.8h-4zM423.6 71.8h4v3.8h-4zM428.8 71.8h4v3.8h-4zM434.0 71.8h4v3.8h-4zM439.2 71.8h4v3.8h-4zM444.4 71.8h4v3.8h-4zM449.6 71.8h4v3.8h-4zM454.8 71.8h4v3.8h-4zM460.0 71.8h4v3.8h-4zM408.0 76.5h4v3.8h-4zM413.2 76.5h4v3.8h-4zM418.4 76.5h4v3.8h-4zM423.6 76.5h4v3.8h-4zM428.8 76.5h4v3.8h-4zM434.0 76.5h4v3.8h-4zM439.2 76.5h4v3.8h-4zM444.4 76.5h4v3.8h-4zM449.6 76.5h4v3.8h-4zM454.8 76.5h4v3.8h-4zM460.0 76.5h4v3.8h-4z" fill="#0b3a0b"/>
<polyline points="407.0,39.5 412.5,39.5 412.5,32.5 417.5,32.5 417.5,39.5 422.5,39.5 422.5,32.5 427.5,32.5 427.5,39.5 433.5,39.5 433.5,32.5 438.5,32.5 438.5,39.5 443.5,39.5 443.5,32.5 448.5,32.5 448.5,39.5 454.5,39.5 454.5,32.5 459.5,32.5 459.5,39.5 464.0,39.5" fill="none" stroke="#50f0f0" stroke-width="1"/>
<polyline points="407.5,51 411.6,45.5 415.7,51 419.8,45.5 423.9,51 428.0,45.5 432.1,51 436.2,45.5 440.3,51 444.4,45.5 448.5,51 452.6,45.5 456.7,51 460.8,45.5" fill="none" stroke="#c040d0" stroke-width="1"/>
<polyline points="407.0,64.5 412.5,64.5 412.5,58.5 417.5,58.5 417.5,64.5 422.5,64.5 422.5,58.5 427.5,58.5 427.5,64.5 433.5,64.5 433.5,58.5 438.5,58.5 438.5,64.5 443.5,64.5 443.5,58.5 448.5,58.5 448.5,64.5 454.5,64.5 454.5,58.5 459.5,58.5 459.5,64.5 464.0,64.5" fill="none" stroke="#f0f060" stroke-width="1"/>
<polyline points="407.5,70.5 411.6,74.5 415.7,70.5 419.8,74.5 423.9,70.5 428.0,74.5 432.1,70.5 436.2,74.5 440.3,70.5 444.4,74.5 448.5,70.5 452.6,74.5 456.7,70.5 460.8,74.5" fill="none" stroke="#c05020" stroke-width="1"/>
<rect x="555.5" y="105.5" width="123.0" height="132.0" fill="#c9cbad" stroke="#601515" stroke-width="1"/>
<line x1="535" y1="115.5" x2="555" y2="115.5" stroke="#601515" stroke-width="1"/>
<text transform="translate(543,113.5) scale(0.86,1)" font-size="8" font-weight="bold" text-anchor="end" fill="#000" >10</text>
<text transform="translate(560.2,118) scale(0.9,1)" font-size="8.4" font-weight="bold" text-anchor="start" fill="#000" >ENABLE</text>
<line x1="535" y1="125.5" x2="555" y2="125.5" stroke="#601515" stroke-width="1"/>
<text transform="translate(543,123.5) scale(0.86,1)" font-size="8" font-weight="bold" text-anchor="end" fill="#000" >20</text>
<text transform="translate(560.2,128) scale(0.9,1)" font-size="8.4" font-weight="bold" text-anchor="start" fill="#000" >RESET</text>
<line x1="535" y1="135.5" x2="555" y2="135.5" stroke="#601515" stroke-width="1"/>
<text transform="translate(543,133.5) scale(0.86,1)" font-size="8" font-weight="bold" text-anchor="end" fill="#000" >19</text>
<text transform="translate(560.2,138) scale(0.9,1)" font-size="8.4" font-weight="bold" text-anchor="start" fill="#000" >HALF/FULL</text>
<line x1="535" y1="146.5" x2="555" y2="146.5" stroke="#601515" stroke-width="1"/>
<text transform="translate(543,144.5) scale(0.86,1)" font-size="8" font-weight="bold" text-anchor="end" fill="#000" >17</text>
<text transform="translate(560.2,149) scale(0.9,1)" font-size="8.4" font-weight="bold" text-anchor="start" fill="#000" >CW/CCW</text>
<line x1="535" y1="156.5" x2="555" y2="156.5" stroke="#601515" stroke-width="1"/>
<text transform="translate(543,154.5) scale(0.86,1)" font-size="8" font-weight="bold" text-anchor="end" fill="#000" >18</text>
<text transform="translate(560.2,159) scale(0.9,1)" font-size="8.4" font-weight="bold" text-anchor="start" fill="#000" >CLOCK</text>
<line x1="535" y1="176.5" x2="555" y2="176.5" stroke="#601515" stroke-width="1"/>
<text transform="translate(543,174.5) scale(0.86,1)" font-size="8" font-weight="bold" text-anchor="end" fill="#000" >3</text>
<text transform="translate(560.2,179) scale(0.9,1)" font-size="8.4" font-weight="bold" text-anchor="start" fill="#000" >HOME</text>
<line x1="535" y1="197.5" x2="555" y2="197.5" stroke="#601515" stroke-width="1"/>
<text transform="translate(543,195.5) scale(0.86,1)" font-size="8" font-weight="bold" text-anchor="end" fill="#000" >11</text>
<text transform="translate(560.2,200) scale(0.9,1)" font-size="8.4" font-weight="bold" text-anchor="start" fill="#000" >CONTROL</text>
<line x1="535" y1="217.5" x2="555" y2="217.5" stroke="#601515" stroke-width="1"/>
<text transform="translate(543,215.5) scale(0.86,1)" font-size="8" font-weight="bold" text-anchor="end" fill="#000" >15</text>
<text transform="translate(560.2,220) scale(0.9,1)" font-size="8.4" font-weight="bold" text-anchor="start" fill="#000" >VREF</text>
<line x1="535" y1="227.5" x2="555" y2="227.5" stroke="#601515" stroke-width="1"/>
<text transform="translate(543,225.5) scale(0.86,1)" font-size="8" font-weight="bold" text-anchor="end" fill="#000" >16</text>
<text transform="translate(560.2,230) scale(0.9,1)" font-size="8.4" font-weight="bold" text-anchor="start" fill="#000" >OSC</text>
<line x1="678" y1="115.5" x2="699" y2="115.5" stroke="#601515" stroke-width="1"/>
<text transform="translate(688,113.5) scale(0.86,1)" font-size="8" font-weight="bold" text-anchor="start" fill="#000" >4</text>
<text transform="translate(670.2,118) scale(0.9,1)" font-size="8.4" font-weight="bold" text-anchor="end" fill="#000" >A</text>
<line x1="678" y1="125.5" x2="699" y2="125.5" stroke="#601515" stroke-width="1"/>
<text transform="translate(688,123.5) scale(0.86,1)" font-size="8" font-weight="bold" text-anchor="start" fill="#000" >6</text>
<text transform="translate(670.2,128) scale(0.9,1)" font-size="8.4" font-weight="bold" text-anchor="end" fill="#000" >B</text>
<line x1="678" y1="135.5" x2="699" y2="135.5" stroke="#601515" stroke-width="1"/>
<text transform="translate(688,133.5) scale(0.86,1)" font-size="8" font-weight="bold" text-anchor="start" fill="#000" >7</text>
<text transform="translate(670.2,138) scale(0.9,1)" font-size="8.4" font-weight="bold" text-anchor="end" fill="#000" >C</text>
<line x1="678" y1="146.5" x2="699" y2="146.5" stroke="#601515" stroke-width="1"/>
<text transform="translate(688,144.5) scale(0.86,1)" font-size="8" font-weight="bold" text-anchor="start" fill="#000" >9</text>
<text transform="translate(670.2,149) scale(0.9,1)" font-size="8.4" font-weight="bold" text-anchor="end" fill="#000" >D</text>
<line x1="678" y1="156.5" x2="699" y2="156.5" stroke="#601515" stroke-width="1"/>
<text transform="translate(688,154.5) scale(0.86,1)" font-size="8" font-weight="bold" text-anchor="start" fill="#000" >5</text>
<text transform="translate(670.2,159) scale(0.9,1)" font-size="8.4" font-weight="bold" text-anchor="end" fill="#000" >INH1</text>
<line x1="678" y1="166.5" x2="699" y2="166.5" stroke="#601515" stroke-width="1"/>
<text transform="translate(688,164.5) scale(0.86,1)" font-size="8" font-weight="bold" text-anchor="start" fill="#000" >8</text>
<text transform="translate(670.2,169) scale(0.9,1)" font-size="8.4" font-weight="bold" text-anchor="end" fill="#000" >INH2</text>
<line x1="678" y1="186.5" x2="699" y2="186.5" stroke="#601515" stroke-width="1"/>
<text transform="translate(688,184.5) scale(0.86,1)" font-size="8" font-weight="bold" text-anchor="start" fill="#000" >14</text>
<text transform="translate(670.2,189) scale(0.9,1)" font-size="8.4" font-weight="bold" text-anchor="end" fill="#000" >SENS1</text>
<line x1="678" y1="197.5" x2="699" y2="197.5" stroke="#601515" stroke-width="1"/>
<text transform="translate(688,195.5) scale(0.86,1)" font-size="8" font-weight="bold" text-anchor="start" fill="#000" >13</text>
<text transform="translate(670.2,200) scale(0.9,1)" font-size="8.4" font-weight="bold" text-anchor="end" fill="#000" >SENS2</text>
<line x1="678" y1="227.5" x2="699" y2="227.5" stroke="#601515" stroke-width="1"/>
<text transform="translate(688,225.5) scale(0.86,1)" font-size="8" font-weight="bold" text-anchor="start" fill="#000" >1</text>
<text transform="translate(670.2,230) scale(0.9,1)" font-size="8.4" font-weight="bold" text-anchor="end" fill="#000" >SYNC</text>
<line x1="561" y1="120.5" x2="589" y2="120.5" stroke="#000" stroke-width="1"/>
<line x1="584" y1="130.5" x2="605" y2="130.5" stroke="#000" stroke-width="1"/>
<line x1="576" y1="141.5" x2="596" y2="141.5" stroke="#000" stroke-width="1"/>
<line x1="560" y1="151.5" x2="589" y2="151.5" stroke="#000" stroke-width="1"/>
<line x1="653" y1="151.5" x2="673" y2="151.5" stroke="#000" stroke-width="1"/>
<line x1="653" y1="161.5" x2="673" y2="161.5" stroke="#000" stroke-width="1"/>
<text x="607" y="118" font-size="8.4" font-weight="bold" text-anchor="start" fill="#000" textLength="16" lengthAdjust="spacingAndGlyphs" >VCC</text>
<text x="606" y="232" font-size="8.4" font-weight="bold" text-anchor="start" fill="#000" textLength="18" lengthAdjust="spacingAndGlyphs" >GND</text>
<line x1="616.5" y1="85" x2="616.5" y2="105" stroke="#601515" stroke-width="1"/>
<text transform="translate(620,93) scale(0.86,1)" font-size="8" font-weight="bold" text-anchor="start" fill="#000" >12</text>
<line x1="616.5" y1="237" x2="616.5" y2="257" stroke="#601515" stroke-width="1"/>
<text transform="translate(621,255) scale(0.86,1)" font-size="8" font-weight="bold" text-anchor="start" fill="#000" >2</text>
<text x="678" y="93" font-size="13.5" font-weight="normal" text-anchor="start" fill="#000" textLength="15.5" lengthAdjust="spacingAndGlyphs" >U3</text>
<text x="679" y="255.5" font-size="8.4" font-weight="bold" text-anchor="start" fill="#000" textLength="14" lengthAdjust="spacingAndGlyphs" >L297</text>
<text x="679" y="265.5" font-size="8.4" font-weight="bold" text-anchor="start" fill="#949494" textLength="27" lengthAdjust="spacingAndGlyphs" >&lt;TEXT&gt;</text>
<rect x="555.5" y="349.5" width="123.0" height="132.0" fill="#c9cbad" stroke="#601515" stroke-width="1"/>
<line x1="535" y1="359.5" x2="555" y2="359.5" stroke="#601515" stroke-width="1"/>
<text transform="translate(543,357.5) scale(0.86,1)" font-size="8" font-weight="bold" text-anchor="end" fill="#000" >10</text>
<text transform="translate(560.2,362) scale(0.9,1)" font-size="8.4" font-weight="bold" text-anchor="start" fill="#000" >ENABLE</text>
<line x1="535" y1="369.5" x2="555" y2="369.5" stroke="#601515" stroke-width="1"/>
<text transform="translate(543,367.5) scale(0.86,1)" font-size="8" font-weight="bold" text-anchor="end" fill="#000" >20</text>
<text transform="translate(560.2,372) scale(0.9,1)" font-size="8.4" font-weight="bold" text-anchor="start" fill="#000" >RESET</text>
<line x1="535" y1="379.5" x2="555" y2="379.5" stroke="#601515" stroke-width="1"/>
<text transform="translate(543,377.5) scale(0.86,1)" font-size="8" font-weight="bold" text-anchor="end" fill="#000" >19</text>
<text transform="translate(560.2,382) scale(0.9,1)" font-size="8.4" font-weight="bold" text-anchor="start" fill="#000" >HALF/FULL</text>
<line x1="535" y1="389.5" x2="555" y2="389.5" stroke="#601515" stroke-width="1"/>
<text transform="translate(543,387.5) scale(0.86,1)" font-size="8" font-weight="bold" text-anchor="end" fill="#000" >17</text>
<text transform="translate(560.2,392) scale(0.9,1)" font-size="8.4" font-weight="bold" text-anchor="start" fill="#000" >CW/CCW</text>
<line x1="535" y1="400.5" x2="555" y2="400.5" stroke="#601515" stroke-width="1"/>
<text transform="translate(543,398.5) scale(0.86,1)" font-size="8" font-weight="bold" text-anchor="end" fill="#000" >18</text>
<text transform="translate(560.2,403) scale(0.9,1)" font-size="8.4" font-weight="bold" text-anchor="start" fill="#000" >CLOCK</text>
<line x1="535" y1="420.5" x2="555" y2="420.5" stroke="#601515" stroke-width="1"/>
<text transform="translate(543,418.5) scale(0.86,1)" font-size="8" font-weight="bold" text-anchor="end" fill="#000" >3</text>
<text transform="translate(560.2,423) scale(0.9,1)" font-size="8.4" font-weight="bold" text-anchor="start" fill="#000" >HOME</text>
<line x1="535" y1="440.5" x2="555" y2="440.5" stroke="#601515" stroke-width="1"/>
<text transform="translate(543,438.5) scale(0.86,1)" font-size="8" font-weight="bold" text-anchor="end" fill="#000" >11</text>
<text transform="translate(560.2,443) scale(0.9,1)" font-size="8.4" font-weight="bold" text-anchor="start" fill="#000" >CONTROL</text>
<line x1="535" y1="461.5" x2="555" y2="461.5" stroke="#601515" stroke-width="1"/>
<text transform="translate(543,459.5) scale(0.86,1)" font-size="8" font-weight="bold" text-anchor="end" fill="#000" >15</text>
<text transform="translate(560.2,464) scale(0.9,1)" font-size="8.4" font-weight="bold" text-anchor="start" fill="#000" >VREF</text>
<line x1="535" y1="471.5" x2="555" y2="471.5" stroke="#601515" stroke-width="1"/>
<text transform="translate(543,469.5) scale(0.86,1)" font-size="8" font-weight="bold" text-anchor="end" fill="#000" >16</text>
<text transform="translate(560.2,474) scale(0.9,1)" font-size="8.4" font-weight="bold" text-anchor="start" fill="#000" >OSC</text>
<line x1="678" y1="359.5" x2="699" y2="359.5" stroke="#601515" stroke-width="1"/>
<text transform="translate(688,357.5) scale(0.86,1)" font-size="8" font-weight="bold" text-anchor="start" fill="#000" >4</text>
<text transform="translate(670.2,362) scale(0.9,1)" font-size="8.4" font-weight="bold" text-anchor="end" fill="#000" >A</text>
<line x1="678" y1="369.5" x2="699" y2="369.5" stroke="#601515" stroke-width="1"/>
<text transform="translate(688,367.5) scale(0.86,1)" font-size="8" font-weight="bold" text-anchor="start" fill="#000" >6</text>
<text transform="translate(670.2,372) scale(0.9,1)" font-size="8.4" font-weight="bold" text-anchor="end" fill="#000" >B</text>
<line x1="678" y1="379.5" x2="699" y2="379.5" stroke="#601515" stroke-width="1"/>
<text transform="translate(688,377.5) scale(0.86,1)" font-size="8" font-weight="bold" text-anchor="start" fill="#000" >7</text>
<text transform="translate(670.2,382) scale(0.9,1)" font-size="8.4" font-weight="bold" text-anchor="end" fill="#000" >C</text>
<line x1="678" y1="389.5" x2="699" y2="389.5" stroke="#601515" stroke-width="1"/>
<text transform="translate(688,387.5) scale(0.86,1)" font-size="8" font-weight="bold" text-anchor="start" fill="#000" >9</text>
<text transform="translate(670.2,392) scale(0.9,1)" font-size="8.4" font-weight="bold" text-anchor="end" fill="#000" >D</text>
<line x1="678" y1="400.5" x2="699" y2="400.5" stroke="#601515" stroke-width="1"/>
<text transform="translate(688,398.5) scale(0.86,1)" font-size="8" font-weight="bold" text-anchor="start" fill="#000" >5</text>
<text transform="translate(670.2,403) scale(0.9,1)" font-size="8.4" font-weight="bold" text-anchor="end" fill="#000" >INH1</text>
<line x1="678" y1="410.5" x2="699" y2="410.5" stroke="#601515" stroke-width="1"/>
<text transform="translate(688,408.5) scale(0.86,1)" font-size="8" font-weight="bold" text-anchor="start" fill="#000" >8</text>
<text transform="translate(670.2,413) scale(0.9,1)" font-size="8.4" font-weight="bold" text-anchor="end" fill="#000" >INH2</text>
<line x1="678" y1="430.5" x2="699" y2="430.5" stroke="#601515" stroke-width="1"/>
<text transform="translate(688,428.5) scale(0.86,1)" font-size="8" font-weight="bold" text-anchor="start" fill="#000" >14</text>
<text transform="translate(670.2,433) scale(0.9,1)" font-size="8.4" font-weight="bold" text-anchor="end" fill="#000" >SENS1</text>
<line x1="678" y1="440.5" x2="699" y2="440.5" stroke="#601515" stroke-width="1"/>
<text transform="translate(688,438.5) scale(0.86,1)" font-size="8" font-weight="bold" text-anchor="start" fill="#000" >13</text>
<text transform="translate(670.2,443) scale(0.9,1)" font-size="8.4" font-weight="bold" text-anchor="end" fill="#000" >SENS2</text>
<line x1="678" y1="471.5" x2="699" y2="471.5" stroke="#601515" stroke-width="1"/>
<text transform="translate(688,469.5) scale(0.86,1)" font-size="8" font-weight="bold" text-anchor="start" fill="#000" >1</text>
<text transform="translate(670.2,474) scale(0.9,1)" font-size="8.4" font-weight="bold" text-anchor="end" fill="#000" >SYNC</text>
<line x1="561" y1="364.5" x2="589" y2="364.5" stroke="#000" stroke-width="1"/>
<line x1="584" y1="374.5" x2="605" y2="374.5" stroke="#000" stroke-width="1"/>
<line x1="576" y1="384.5" x2="596" y2="384.5" stroke="#000" stroke-width="1"/>
<line x1="560" y1="395.5" x2="589" y2="395.5" stroke="#000" stroke-width="1"/>
<line x1="653" y1="395.5" x2="673" y2="395.5" stroke="#000" stroke-width="1"/>
<line x1="653" y1="405.5" x2="673" y2="405.5" stroke="#000" stroke-width="1"/>
<text x="607" y="362" font-size="8.4" font-weight="bold" text-anchor="start" fill="#000" textLength="16" lengthAdjust="spacingAndGlyphs" >VCC</text>
<text x="606" y="476" font-size="8.4" font-weight="bold" text-anchor="start" fill="#000" textLength="18" lengthAdjust="spacingAndGlyphs" >GND</text>
<line x1="616.5" y1="329" x2="616.5" y2="349" stroke="#601515" stroke-width="1"/>
<text transform="translate(620,337) scale(0.86,1)" font-size="8" font-weight="bold" text-anchor="start" fill="#000" >12</text>
<line x1="616.5" y1="481" x2="616.5" y2="501" stroke="#601515" stroke-width="1"/>
<text transform="translate(621,499) scale(0.86,1)" font-size="8" font-weight="bold" text-anchor="start" fill="#000" >2</text>
<text x="678" y="337" font-size="13.5" font-weight="normal" text-anchor="start" fill="#000" textLength="15.5" lengthAdjust="spacingAndGlyphs" >U4</text>
<text x="679" y="500" font-size="8.4" font-weight="bold" text-anchor="start" fill="#000" textLength="14" lengthAdjust="spacingAndGlyphs" >L297</text>
<text x="679" y="510" font-size="8.4" font-weight="bold" text-anchor="start" fill="#949494" textLength="27" lengthAdjust="spacingAndGlyphs" >&lt;TEXT&gt;</text>
<rect x="739.5" y="105.5" width="122.0" height="102.0" fill="#c9cbad" stroke="#601515" stroke-width="1"/>
<line x1="718" y1="115.5" x2="739" y2="115.5" stroke="#601515" stroke-width="1"/>
<text transform="translate(727,113.5) scale(0.86,1)" font-size="8" font-weight="bold" text-anchor="end" fill="#000" >5</text>
<text transform="translate(744.2,118) scale(0.9,1)" font-size="8.4" font-weight="bold" text-anchor="start" fill="#000" >IN1</text>
<line x1="718" y1="125.5" x2="739" y2="125.5" stroke="#601515" stroke-width="1"/>
<text transform="translate(727,123.5) scale(0.86,1)" font-size="8" font-weight="bold" text-anchor="end" fill="#000" >7</text>
<text transform="translate(744.2,128) scale(0.9,1)" font-size="8.4" font-weight="bold" text-anchor="start" fill="#000" >IN2</text>
<line x1="718" y1="135.5" x2="739" y2="135.5" stroke="#601515" stroke-width="1"/>
<text transform="translate(727,133.5) scale(0.86,1)" font-size="8" font-weight="bold" text-anchor="end" fill="#000" >10</text>
<text transform="translate(744.2,138) scale(0.9,1)" font-size="8.4" font-weight="bold" text-anchor="start" fill="#000" >IN3</text>
<line x1="718" y1="146.5" x2="739" y2="146.5" stroke="#601515" stroke-width="1"/>
<text transform="translate(727,144.5) scale(0.86,1)" font-size="8" font-weight="bold" text-anchor="end" fill="#000" >12</text>
<text transform="translate(744.2,149) scale(0.9,1)" font-size="8.4" font-weight="bold" text-anchor="start" fill="#000" >IN4</text>
<line x1="718" y1="156.5" x2="739" y2="156.5" stroke="#601515" stroke-width="1"/>
<text transform="translate(727,154.5) scale(0.86,1)" font-size="8" font-weight="bold" text-anchor="end" fill="#000" >6</text>
<text transform="translate(744.2,159) scale(0.9,1)" font-size="8.4" font-weight="bold" text-anchor="start" fill="#000" >ENA</text>
<line x1="718" y1="166.5" x2="739" y2="166.5" stroke="#601515" stroke-width="1"/>
<text transform="translate(727,164.5) scale(0.86,1)" font-size="8" font-weight="bold" text-anchor="end" fill="#000" >11</text>
<text transform="translate(744.2,169) scale(0.9,1)" font-size="8.4" font-weight="bold" text-anchor="start" fill="#000" >ENB</text>
<line x1="718" y1="186.5" x2="739" y2="186.5" stroke="#601515" stroke-width="1"/>
<text transform="translate(727,184.5) scale(0.86,1)" font-size="8" font-weight="bold" text-anchor="end" fill="#000" >1</text>
<text transform="translate(744.2,189) scale(0.9,1)" font-size="8.4" font-weight="bold" text-anchor="start" fill="#000" >SENSA</text>
<line x1="718" y1="197.5" x2="739" y2="197.5" stroke="#601515" stroke-width="1"/>
<text transform="translate(727,195.5) scale(0.86,1)" font-size="8" font-weight="bold" text-anchor="end" fill="#000" >15</text>
<text transform="translate(744.2,200) scale(0.9,1)" font-size="8.4" font-weight="bold" text-anchor="start" fill="#000" >SENSB</text>
<line x1="861" y1="125.5" x2="883" y2="125.5" stroke="#601515" stroke-width="1"/>
<text transform="translate(871,123.5) scale(0.86,1)" font-size="8" font-weight="bold" text-anchor="start" fill="#000" >2</text>
<text transform="translate(853.2,128) scale(0.9,1)" font-size="8.4" font-weight="bold" text-anchor="end" fill="#000" >OUT1</text>
<line x1="861" y1="146.5" x2="883" y2="146.5" stroke="#601515" stroke-width="1"/>
<text transform="translate(871,144.5) scale(0.86,1)" font-size="8" font-weight="bold" text-anchor="start" fill="#000" >3</text>
<text transform="translate(853.2,149) scale(0.9,1)" font-size="8.4" font-weight="bold" text-anchor="end" fill="#000" >OUT2</text>
<line x1="861" y1="166.5" x2="883" y2="166.5" stroke="#601515" stroke-width="1"/>
<text transform="translate(871,164.5) scale(0.86,1)" font-size="8" font-weight="bold" text-anchor="start" fill="#000" >13</text>
<text transform="translate(853.2,169) scale(0.9,1)" font-size="8.4" font-weight="bold" text-anchor="end" fill="#000" >OUT3</text>
<line x1="861" y1="186.5" x2="883" y2="186.5" stroke="#601515" stroke-width="1"/>
<text transform="translate(871,184.5) scale(0.86,1)" font-size="8" font-weight="bold" text-anchor="start" fill="#000" >14</text>
<text transform="translate(853.2,189) scale(0.9,1)" font-size="8.4" font-weight="bold" text-anchor="end" fill="#000" >OUT4</text>
<text x="771" y="118" font-size="8.4" font-weight="bold" text-anchor="start" fill="#000" textLength="16.5" lengthAdjust="spacingAndGlyphs" >VCC</text>
<text x="814" y="118" font-size="8.4" font-weight="bold" text-anchor="start" fill="#000" textLength="10.5" lengthAdjust="spacingAndGlyphs" >VS</text>
<text x="790.5" y="201" font-size="8.4" font-weight="bold" text-anchor="start" fill="#000" textLength="18" lengthAdjust="spacingAndGlyphs" >GND</text>
<line x1="780.5" y1="85" x2="780.5" y2="105" stroke="#601515" stroke-width="1"/>
<text transform="translate(783,93) scale(0.86,1)" font-size="8" font-weight="bold" text-anchor="start" fill="#000" >9</text>
<line x1="820.5" y1="85" x2="820.5" y2="105" stroke="#601515" stroke-width="1"/>
<text transform="translate(823,93) scale(0.86,1)" font-size="8" font-weight="bold" text-anchor="start" fill="#000" >4</text>
<line x1="800.5" y1="207" x2="800.5" y2="227" stroke="#601515" stroke-width="1"/>
<text transform="translate(803,225) scale(0.86,1)" font-size="8" font-weight="bold" text-anchor="start" fill="#000" >8</text>
<text x="862" y="93" font-size="13.5" font-weight="normal" text-anchor="start" fill="#000" textLength="15.5" lengthAdjust="spacingAndGlyphs" >U2</text>
<text x="862.5" y="226" font-size="8.4" font-weight="bold" text-anchor="start" fill="#000" textLength="15" lengthAdjust="spacingAndGlyphs" >L298</text>
<text x="862.5" y="236" font-size="8.4" font-weight="bold" text-anchor="start" fill="#949494" textLength="27" lengthAdjust="spacingAndGlyphs" >&lt;TEXT&gt;</text>
<rect x="739.5" y="349.5" width="122.0" height="102.0" fill="#c9cbad" stroke="#601515" stroke-width="1"/>
<line x1="718" y1="359.5" x2="739" y2="359.5" stroke="#601515" stroke-width="1"/>
<text transform="translate(727,357.5) scale(0.86,1)" font-size="8" font-weight="bold" text-anchor="end" fill="#000" >5</text>
<text transform="translate(744.2,362) scale(0.9,1)" font-size="8.4" font-weight="bold" text-anchor="start" fill="#000" >IN1</text>
<line x1="718" y1="369.5" x2="739" y2="369.5" stroke="#601515" stroke-width="1"/>
<text transform="translate(727,367.5) scale(0.86,1)" font-size="8" font-weight="bold" text-anchor="end" fill="#000" >7</text>
<text transform="translate(744.2,372) scale(0.9,1)" font-size="8.4" font-weight="bold" text-anchor="start" fill="#000" >IN2</text>
<line x1="718" y1="379.5" x2="739" y2="379.5" stroke="#601515" stroke-width="1"/>
<text transform="translate(727,377.5) scale(0.86,1)" font-size="8" font-weight="bold" text-anchor="end" fill="#000" >10</text>
<text transform="translate(744.2,382) scale(0.9,1)" font-size="8.4" font-weight="bold" text-anchor="start" fill="#000" >IN3</text>
<line x1="718" y1="389.5" x2="739" y2="389.5" stroke="#601515" stroke-width="1"/>
<text transform="translate(727,387.5) scale(0.86,1)" font-size="8" font-weight="bold" text-anchor="end" fill="#000" >12</text>
<text transform="translate(744.2,392) scale(0.9,1)" font-size="8.4" font-weight="bold" text-anchor="start" fill="#000" >IN4</text>
<line x1="718" y1="400.5" x2="739" y2="400.5" stroke="#601515" stroke-width="1"/>
<text transform="translate(727,398.5) scale(0.86,1)" font-size="8" font-weight="bold" text-anchor="end" fill="#000" >6</text>
<text transform="translate(744.2,403) scale(0.9,1)" font-size="8.4" font-weight="bold" text-anchor="start" fill="#000" >ENA</text>
<line x1="718" y1="410.5" x2="739" y2="410.5" stroke="#601515" stroke-width="1"/>
<text transform="translate(727,408.5) scale(0.86,1)" font-size="8" font-weight="bold" text-anchor="end" fill="#000" >11</text>
<text transform="translate(744.2,413) scale(0.9,1)" font-size="8.4" font-weight="bold" text-anchor="start" fill="#000" >ENB</text>
<line x1="718" y1="430.5" x2="739" y2="430.5" stroke="#601515" stroke-width="1"/>
<text transform="translate(727,428.5) scale(0.86,1)" font-size="8" font-weight="bold" text-anchor="end" fill="#000" >1</text>
<text transform="translate(744.2,433) scale(0.9,1)" font-size="8.4" font-weight="bold" text-anchor="start" fill="#000" >SENSA</text>
<line x1="718" y1="440.5" x2="739" y2="440.5" stroke="#601515" stroke-width="1"/>
<text transform="translate(727,438.5) scale(0.86,1)" font-size="8" font-weight="bold" text-anchor="end" fill="#000" >15</text>
<text transform="translate(744.2,443) scale(0.9,1)" font-size="8.4" font-weight="bold" text-anchor="start" fill="#000" >SENSB</text>
<line x1="861" y1="369.5" x2="883" y2="369.5" stroke="#601515" stroke-width="1"/>
<text transform="translate(871,367.5) scale(0.86,1)" font-size="8" font-weight="bold" text-anchor="start" fill="#000" >2</text>
<text transform="translate(853.2,372) scale(0.9,1)" font-size="8.4" font-weight="bold" text-anchor="end" fill="#000" >OUT1</text>
<line x1="861" y1="389.5" x2="883" y2="389.5" stroke="#601515" stroke-width="1"/>
<text transform="translate(871,387.5) scale(0.86,1)" font-size="8" font-weight="bold" text-anchor="start" fill="#000" >3</text>
<text transform="translate(853.2,392) scale(0.9,1)" font-size="8.4" font-weight="bold" text-anchor="end" fill="#000" >OUT2</text>
<line x1="861" y1="410.5" x2="883" y2="410.5" stroke="#601515" stroke-width="1"/>
<text transform="translate(871,408.5) scale(0.86,1)" font-size="8" font-weight="bold" text-anchor="start" fill="#000" >13</text>
<text transform="translate(853.2,413) scale(0.9,1)" font-size="8.4" font-weight="bold" text-anchor="end" fill="#000" >OUT3</text>
<line x1="861" y1="430.5" x2="883" y2="430.5" stroke="#601515" stroke-width="1"/>
<text transform="translate(871,428.5) scale(0.86,1)" font-size="8" font-weight="bold" text-anchor="start" fill="#000" >14</text>
<text transform="translate(853.2,433) scale(0.9,1)" font-size="8.4" font-weight="bold" text-anchor="end" fill="#000" >OUT4</text>
<text x="771" y="362" font-size="8.4" font-weight="bold" text-anchor="start" fill="#000" textLength="16.5" lengthAdjust="spacingAndGlyphs" >VCC</text>
<text x="814" y="362" font-size="8.4" font-weight="bold" text-anchor="start" fill="#000" textLength="10.5" lengthAdjust="spacingAndGlyphs" >VS</text>
<text x="790.5" y="444" font-size="8.4" font-weight="bold" text-anchor="start" fill="#000" textLength="18" lengthAdjust="spacingAndGlyphs" >GND</text>
<line x1="780.5" y1="329" x2="780.5" y2="349" stroke="#601515" stroke-width="1"/>
<text transform="translate(783,337) scale(0.86,1)" font-size="8" font-weight="bold" text-anchor="start" fill="#000" >9</text>
<line x1="820.5" y1="329" x2="820.5" y2="349" stroke="#601515" stroke-width="1"/>
<text transform="translate(823,337) scale(0.86,1)" font-size="8" font-weight="bold" text-anchor="start" fill="#000" >4</text>
<line x1="800.5" y1="451" x2="800.5" y2="471" stroke="#601515" stroke-width="1"/>
<text transform="translate(803,469) scale(0.86,1)" font-size="8" font-weight="bold" text-anchor="start" fill="#000" >8</text>
<text x="862" y="337" font-size="13.5" font-weight="normal" text-anchor="start" fill="#000" textLength="15.5" lengthAdjust="spacingAndGlyphs" >U5</text>
<text x="862.5" y="470" font-size="8.4" font-weight="bold" text-anchor="start" fill="#000" textLength="15" lengthAdjust="spacingAndGlyphs" >L298</text>
<text x="862.5" y="480" font-size="8.4" font-weight="bold" text-anchor="start" fill="#949494" textLength="27" lengthAdjust="spacingAndGlyphs" >&lt;TEXT&gt;</text>
<circle cx="973.5" cy="146.5" r="19.8" fill="#cdcdcd" stroke="#601515" stroke-width="1.1"/>
<circle cx="973.5" cy="146.5" r="5" fill="#a6a6a6" stroke="#601515" stroke-width="1.1"/>
<path d="M962.5,136.0 Q973.5,127.0 984.5,136.0 L980.5,139.0 Q973.5,133.0 966.5,139.0 Z" fill="none" stroke="#601515" stroke-width="1.1"/>
<path d="M962.5,157.0 Q973.5,166.0 984.5,157.0 L980.5,154.0 Q973.5,160.0 966.5,154.0 Z" fill="none" stroke="#601515" stroke-width="1.1"/>
<rect x="959.0" y="168.5" width="29.5" height="10" fill="#004000" stroke="#44cc44" stroke-width="1.6"/>
<text x="962.0" y="176.5" font-size="8" font-weight="normal" text-anchor="start" fill="#1f8a1f" textLength="19.5" lengthAdjust="spacingAndGlyphs" >+88.8</text>
<circle cx="963.5" cy="389.5" r="19.8" fill="#cdcdcd" stroke="#601515" stroke-width="1.1"/>
<circle cx="963.5" cy="389.5" r="5" fill="#a6a6a6" stroke="#601515" stroke-width="1.1"/>
<path d="M952.5,379.0 Q963.5,370.0 974.5,379.0 L970.5,382.0 Q963.5,376.0 956.5,382.0 Z" fill="none" stroke="#601515" stroke-width="1.1"/>
<path d="M952.5,400.0 Q963.5,409.0 974.5,400.0 L970.5,397.0 Q963.5,403.0 956.5,397.0 Z" fill="none" stroke="#601515" stroke-width="1.1"/>
<rect x="949.0" y="412.5" width="29.5" height="10" fill="#004000" stroke="#44cc44" stroke-width="1.6"/>
<text x="952.0" y="420.5" font-size="8" font-weight="normal" text-anchor="start" fill="#1f8a1f" textLength="19.5" lengthAdjust="spacingAndGlyphs" >+88.8</text>
<rect x="463.5" y="553.5" width="72.0" height="132.0" fill="#c9cbad" stroke="#601515" stroke-width="1"/>
<line x1="443" y1="573.5" x2="463" y2="573.5" stroke="#601515" stroke-width="1"/>
<text transform="translate(453,571.5) scale(0.86,1)" font-size="8" font-weight="bold" text-anchor="end" fill="#000" >1</text>
<text transform="translate(468.5,576) scale(0.9,1)" font-size="8.4" font-weight="bold" text-anchor="start" fill="#000" >DCD</text>
<line x1="443" y1="583.5" x2="463" y2="583.5" stroke="#601515" stroke-width="1"/>
<text transform="translate(453,581.5) scale(0.86,1)" font-size="8" font-weight="bold" text-anchor="end" fill="#000" >6</text>
<text transform="translate(468.5,586) scale(0.9,1)" font-size="8.4" font-weight="bold" text-anchor="start" fill="#000" >DSR</text>
<line x1="443" y1="593.5" x2="463" y2="593.5" stroke="#601515" stroke-width="1"/>
<text transform="translate(453,591.5) scale(0.86,1)" font-size="8" font-weight="bold" text-anchor="end" fill="#000" >2</text>
<text transform="translate(468.5,596) scale(0.9,1)" font-size="8.4" font-weight="bold" text-anchor="start" fill="#000" >RXD</text>
<line x1="443" y1="604.5" x2="463" y2="604.5" stroke="#601515" stroke-width="1"/>
<text transform="translate(453,602.5) scale(0.86,1)" font-size="8" font-weight="bold" text-anchor="end" fill="#000" >7</text>
<text transform="translate(468.5,607) scale(0.9,1)" font-size="8.4" font-weight="bold" text-anchor="start" fill="#000" >RTS</text>
<line x1="443" y1="614.5" x2="463" y2="614.5" stroke="#601515" stroke-width="1"/>
<text transform="translate(453,612.5) scale(0.86,1)" font-size="8" font-weight="bold" text-anchor="end" fill="#000" >3</text>
<text transform="translate(468.5,617) scale(0.9,1)" font-size="8.4" font-weight="bold" text-anchor="start" fill="#000" >TXD</text>
<line x1="443" y1="624.5" x2="463" y2="624.5" stroke="#601515" stroke-width="1"/>
<text transform="translate(453,622.5) scale(0.86,1)" font-size="8" font-weight="bold" text-anchor="end" fill="#000" >8</text>
<text transform="translate(468.5,627) scale(0.9,1)" font-size="8.4" font-weight="bold" text-anchor="start" fill="#000" >CTS</text>
<line x1="443" y1="634.5" x2="463" y2="634.5" stroke="#601515" stroke-width="1"/>
<text transform="translate(453,632.5) scale(0.86,1)" font-size="8" font-weight="bold" text-anchor="end" fill="#000" >4</text>
<text transform="translate(468.5,637) scale(0.9,1)" font-size="8.4" font-weight="bold" text-anchor="start" fill="#000" >DTR</text>
<line x1="443" y1="644.5" x2="463" y2="644.5" stroke="#601515" stroke-width="1"/>
<text transform="translate(453,642.5) scale(0.86,1)" font-size="8" font-weight="bold" text-anchor="end" fill="#000" >9</text>
<text transform="translate(468.5,647) scale(0.9,1)" font-size="8.4" font-weight="bold" text-anchor="start" fill="#000" >RI</text>
<path d="M494.5,568 Q494.5,563 500,563 L520,567.5 Q525.5,569 525.5,575 L525.5,654 Q525.5,659.5 520,661 L500,665 Q494.5,665.5 494.5,660 Z" fill="none" stroke="#601515" stroke-width="1.1"/>
<line x1="494.5" y1="573.5" x2="499" y2="573.5" stroke="#601515" stroke-width="1"/>
<circle cx="504.5" cy="573.5" r="4.8" fill="#8a8a8a" stroke="#601515" stroke-width="1"/>
<line x1="494.5" y1="593.5" x2="499" y2="593.5" stroke="#601515" stroke-width="1"/>
<circle cx="504.5" cy="593.5" r="4.8" fill="#8a8a8a" stroke="#601515" stroke-width="1"/>
<line x1="494.5" y1="614.5" x2="499" y2="614.5" stroke="#601515" stroke-width="1"/>
<circle cx="504.5" cy="614.5" r="4.8" fill="#8a8a8a" stroke="#601515" stroke-width="1"/>
<line x1="494.5" y1="634.5" x2="499" y2="634.5" stroke="#601515" stroke-width="1"/>
<circle cx="504.5" cy="634.5" r="4.8" fill="#8a8a8a" stroke="#601515" stroke-width="1"/>
<line x1="494.5" y1="655.5" x2="499" y2="655.5" stroke="#601515" stroke-width="1"/>
<circle cx="504.5" cy="655.5" r="4.8" fill="#8a8a8a" stroke="#601515" stroke-width="1"/>
<line x1="494.5" y1="583.5" x2="509" y2="583.5" stroke="#601515" stroke-width="1"/>
<circle cx="514.5" cy="583.5" r="4.8" fill="#8a8a8a" stroke="#601515" stroke-width="1"/>
<line x1="494.5" y1="604.5" x2="509" y2="604.5" stroke="#601515" stroke-width="1"/>
<circle cx="514.5" cy="604.5" r="4.8" fill="#8a8a8a" stroke="#601515" stroke-width="1"/>
<line x1="494.5" y1="624.5" x2="509" y2="624.5" stroke="#601515" stroke-width="1"/>
<circle cx="514.5" cy="624.5" r="4.8" fill="#8a8a8a" stroke="#601515" stroke-width="1"/>
<line x1="494.5" y1="644.5" x2="509" y2="644.5" stroke="#601515" stroke-width="1"/>
<circle cx="514.5" cy="644.5" r="4.8" fill="#8a8a8a" stroke="#601515" stroke-width="1"/>
<polyline points="499,657.5 479.5,657.5 479.5,660.5" fill="none" stroke="#601515" stroke-width="1"/>
<line x1="471" y1="660.5" x2="488" y2="660.5" stroke="#601515" stroke-width="1"/>
<line x1="474" y1="663.5" x2="485" y2="663.5" stroke="#601515" stroke-width="1"/>
<line x1="477" y1="666.5" x2="482" y2="666.5" stroke="#601515" stroke-width="1"/>
<rect x="468.5" y="672.5" width="9" height="8" fill="none" stroke="#601515" stroke-width="1"/>
<rect x="520.5" y="672.5" width="9" height="8" fill="none" stroke="#601515" stroke-width="1"/>
<text x="484.5" y="679.5" font-size="8.4" font-weight="bold" text-anchor="start" fill="#a00000" textLength="27.5" lengthAdjust="spacingAndGlyphs" >ERROR</text>
<text x="461.5" y="550.5" font-size="13.5" font-weight="normal" text-anchor="start" fill="#000" textLength="14.5" lengthAdjust="spacingAndGlyphs" >P1</text>
<text x="462" y="694" font-size="8.4" font-weight="bold" text-anchor="start" fill="#000" textLength="32.5" lengthAdjust="spacingAndGlyphs" >COMPIM</text>
<text x="462" y="704" font-size="8.4" font-weight="bold" text-anchor="start" fill="#949494" textLength="27" lengthAdjust="spacingAndGlyphs" >&lt;TEXT&gt;</text>
<circle cx="351.5" cy="156.5" r="2.6" fill="#034403"/>
<circle cx="412.5" cy="197.5" r="2.6" fill="#034403"/>
<circle cx="616.5" cy="74.5" r="2.6" fill="#034403"/>
<circle cx="718.5" cy="186.5" r="2.6" fill="#034403"/>
<circle cx="718.5" cy="197.5" r="2.6" fill="#034403"/>
<circle cx="718.5" cy="217.5" r="2.6" fill="#034403"/>
<circle cx="718.5" cy="258.5" r="2.6" fill="#034403"/>
<circle cx="963.5" cy="115.5" r="2.6" fill="#034403"/>
<circle cx="627.5" cy="329.5" r="2.6" fill="#034403"/>
<circle cx="708.5" cy="430.5" r="2.6" fill="#034403"/>
<circle cx="708.5" cy="440.5" r="2.6" fill="#034403"/>
<circle cx="708.5" cy="481.5" r="2.6" fill="#034403"/>
<circle cx="739.5" cy="471.5" r="2.6" fill="#034403"/>
<circle cx="963.5" cy="359.5" r="2.6" fill="#034403"/>
<circle cx="96.5" cy="125.5" r="2.6" fill="#034403"/>
<circle cx="96.5" cy="197.5" r="2.6" fill="#034403"/>
<circle cx="25.5" cy="156.5" r="2.6" fill="#034403"/>
<circle cx="55.5" cy="319.5" r="2.6" fill="#034403"/>
<circle cx="55.5" cy="369.5" r="2.6" fill="#034403"/></svg></body></html>
